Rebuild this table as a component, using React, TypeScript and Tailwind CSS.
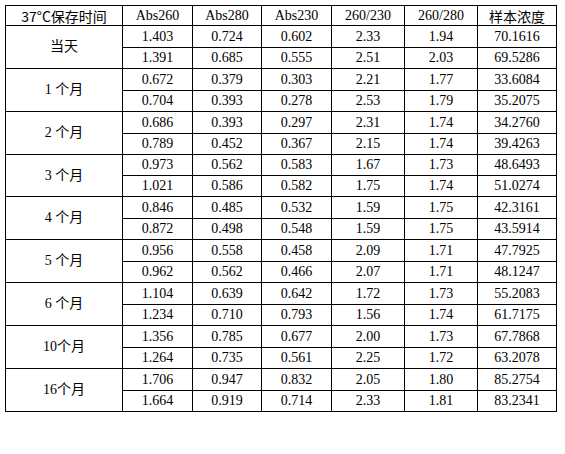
import React from "react";

const groups: { label: string; rows: string[][]; h: [string, string] }[] = [
  { label: "当天", h: ["h-[21px]", "h-[20px]"], rows: [["1.403", "0.724", "0.602", "2.33", "1.94", "70.1616"], ["1.391", "0.685", "0.555", "2.51", "2.03", "69.5286"]] },
  { label: "1 个月", h: ["h-[21px]", "h-[20px]"], rows: [["0.672", "0.379", "0.303", "2.21", "1.77", "33.6084"], ["0.704", "0.393", "0.278", "2.53", "1.79", "35.2075"]] },
  { label: "2 个月", h: ["h-[21px]", "h-[20px]"], rows: [["0.686", "0.393", "0.297", "2.31", "1.74", "34.2760"], ["0.789", "0.452", "0.367", "2.15", "1.74", "39.4263"]] },
  { label: "3 个月", h: ["h-[20px]", "h-[20px]"], rows: [["0.973", "0.562", "0.583", "1.67", "1.73", "48.6493"], ["1.021", "0.586", "0.582", "1.75", "1.74", "51.0274"]] },
  { label: "4 个月", h: ["h-[21px]", "h-[20px]"], rows: [["0.846", "0.485", "0.532", "1.59", "1.75", "42.3161"], ["0.872", "0.498", "0.548", "1.59", "1.75", "43.5914"]] },
  { label: "5 个月", h: ["h-[21px]", "h-[20px]"], rows: [["0.956", "0.558", "0.458", "2.09", "1.71", "47.7925"], ["0.962", "0.562", "0.466", "2.07", "1.71", "48.1247"]] },
  { label: "6 个月", h: ["h-[21px]", "h-[20px]"], rows: [["1.104", "0.639", "0.642", "1.72", "1.73", "55.2083"], ["1.234", "0.710", "0.793", "1.56", "1.74", "61.7175"]] },
  { label: "10个月", h: ["h-[21px]", "h-[20px]"], rows: [["1.356", "0.785", "0.677", "2.00", "1.73", "67.7868"], ["1.264", "0.735", "0.561", "2.25", "1.72", "63.2078"]] },
  { label: "16个月", h: ["h-[21px]", "h-[20px]"], rows: [["1.706", "0.947", "0.832", "2.05", "1.80", "85.2754"], ["1.664", "0.919", "0.714", "2.33", "1.81", "83.2341"]] },
];

const cols = "grid grid-cols-[116px_69px_68px_69px_72px_72px_78px] gap-px";
const font = "font-['Liberation_Serif','Noto_Sans_CJK_SC',serif]";

export default function App() {
  return (
    <div className={`w-[565px] h-[454px] bg-white pt-[5px] pl-[5px] text-black ${font}`}>
      <div className="w-[552px] border border-black bg-black flex flex-col gap-px">
        <div className={`${cols} h-[19px]`}>
          {["37°C保存时间", "Abs260", "Abs280", "Abs230", "260/230", "260/280", "样本浓度"].map((t, i) => (
            <div
              key={i}
              className={`bg-white flex items-center justify-center text-[14px] leading-none ${
                i === 0 || i === 6 ? "font-['Noto_Sans_CJK_SC',sans-serif] text-[13.5px]" : ""
              }`}
            >
              {t}
            </div>
          ))}
        </div>
        {groups.map((g) => (
          <div key={g.label} className={`${cols}`}>
            <div className="row-span-2 bg-white flex items-center justify-center text-[14px] leading-none">
              {g.label}
            </div>
            {g.rows.map((r, ri) =>
              r.map((v, ci) => (
                <div
                  key={`${ri}-${ci}`}
                  className={`bg-white flex items-center justify-center text-[14px] leading-none ${g.h[ri]}`}
                >
                  {v}
                </div>
              ))
            )}
          </div>
        ))}
      </div>
    </div>
  );
}
